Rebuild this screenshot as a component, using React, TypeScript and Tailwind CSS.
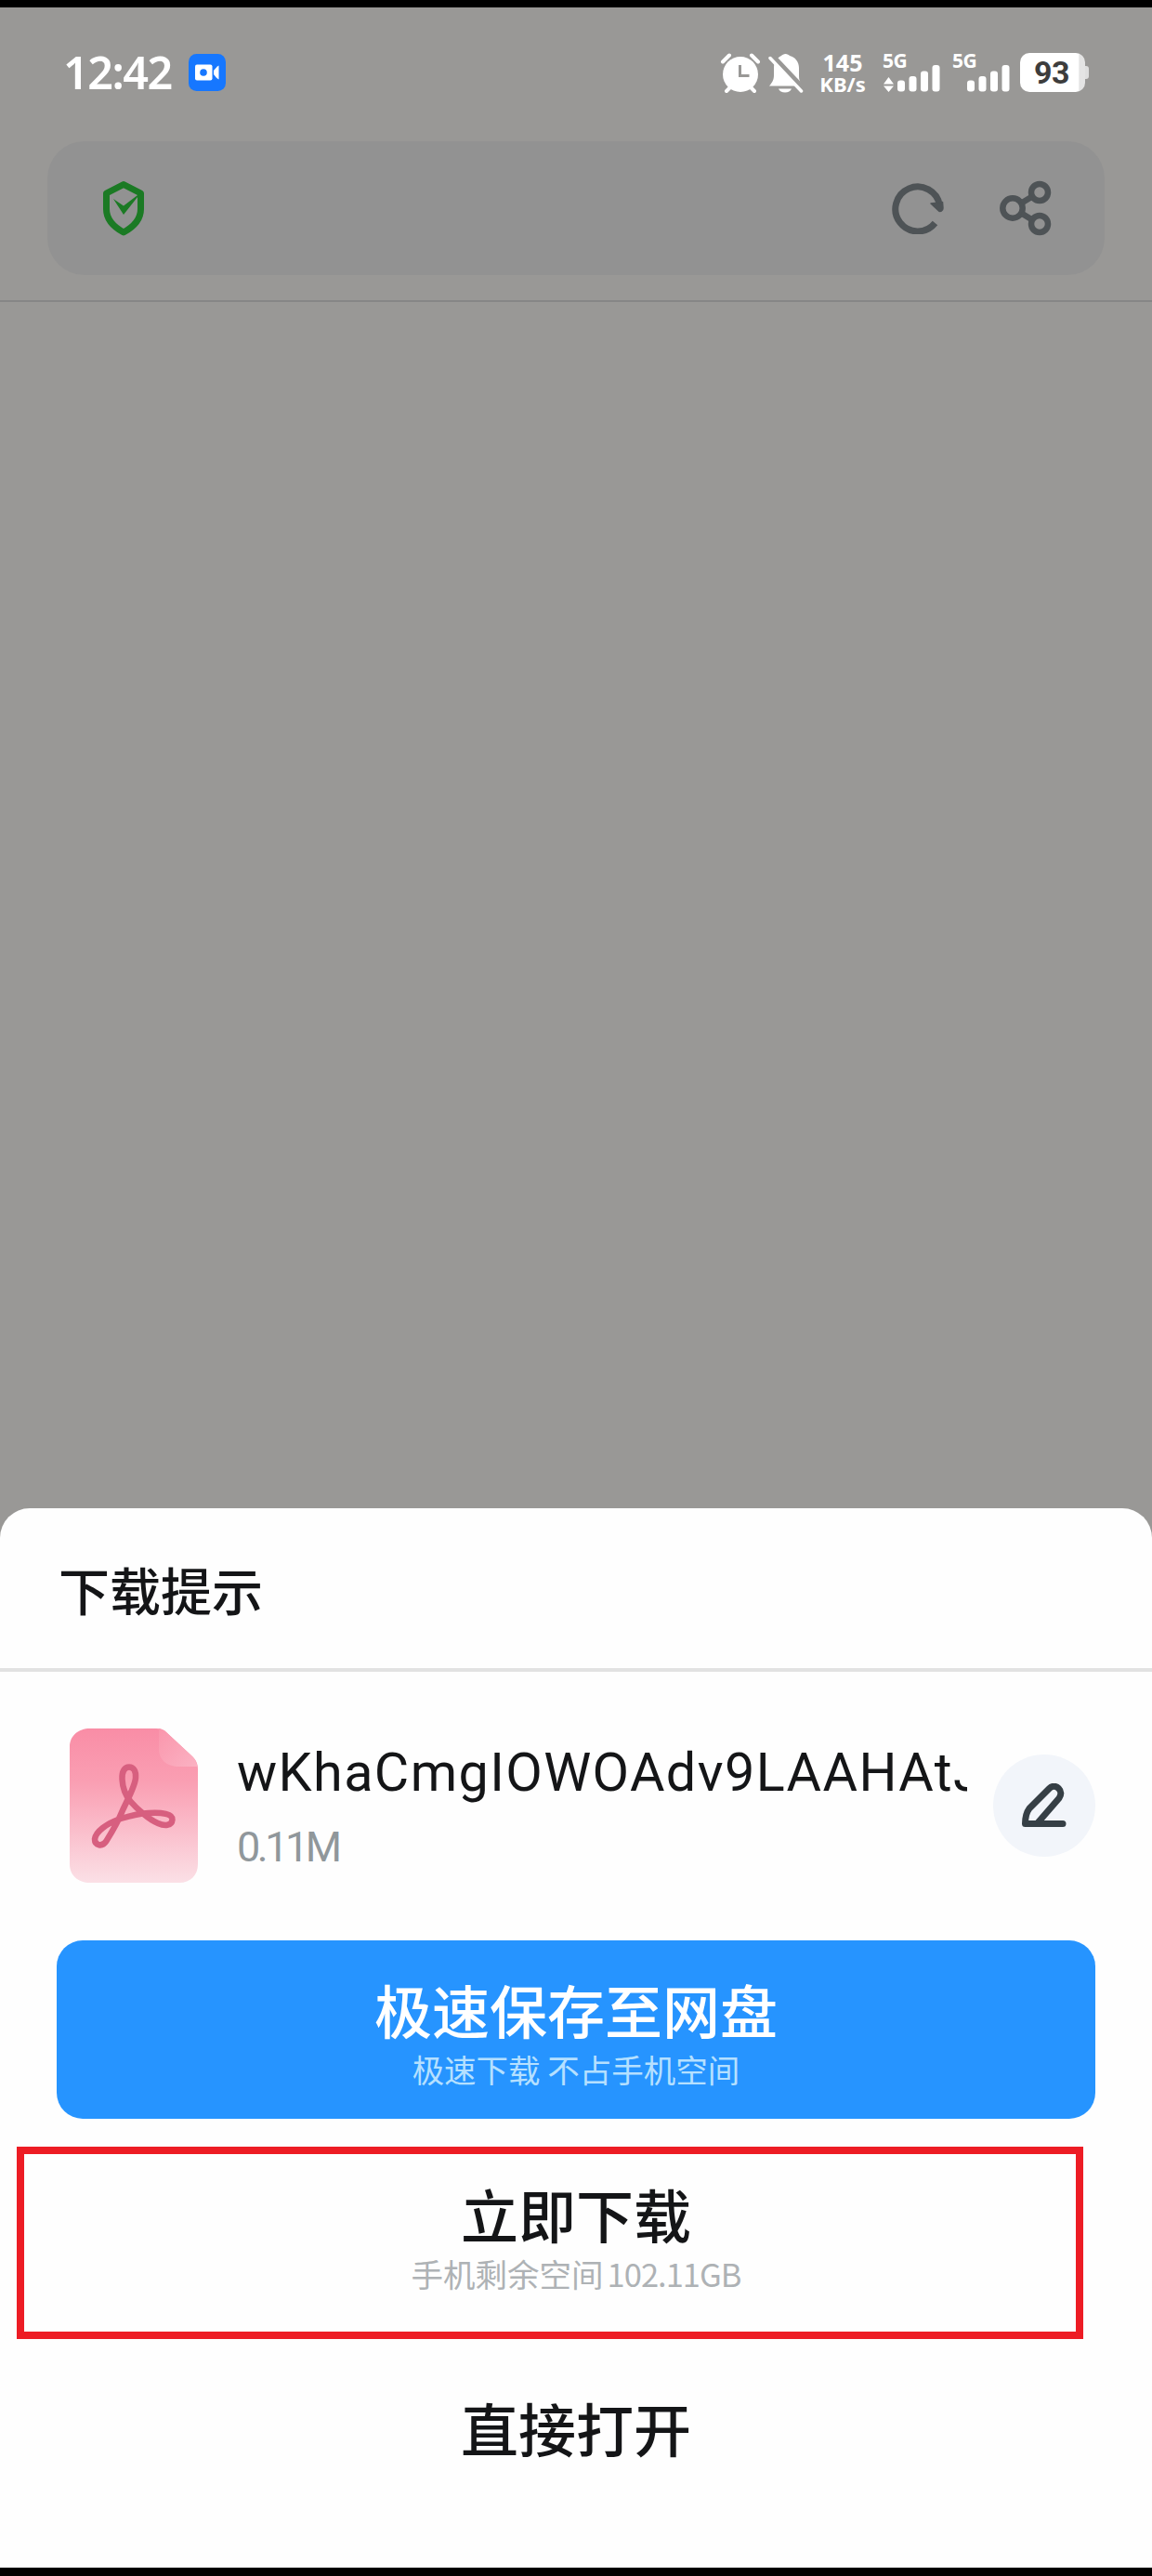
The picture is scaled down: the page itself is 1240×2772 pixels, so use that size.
import React from "react";

const CJK = "font-['Noto_Sans_CJK_SC',sans-serif]";
const LATIN = "font-['Noto_Sans','Noto_Sans_CJK_SC',sans-serif]";
const NAME = "font-['Roboto','Noto_Sans_CJK_SC',sans-serif]";

function AlarmIcon() {
  return (
    <svg className="h-[44px] w-[44px] shrink-0" viewBox="0 0 44 44" fill="none">
      <circle cx="22" cy="23" r="19" fill="#fff" />
      <path d="M3 9.500l7-7M41 9.500l-7-7M7 41l5-5M37 41l-5-5" stroke="#fff" strokeWidth="4" strokeLinecap="round" />
      <path d="M21.500 13v11.500h10" stroke="#999896" strokeWidth="3" />
    </svg>
  );
}

function BellOffIcon() {
  return (
    <svg className="h-[44px] w-[38px] shrink-0" viewBox="0 0 38 44" fill="none">
      <path
        d="M18.500 1c2 0 3.500 1 4.500 2 6 1.500 10 6.500 10 13v9c0 4 1 7 4.500 10.500H1C5 31 6 28 6 24v-8C6 9.500 9 5.500 14 3c1-1 2.500-2 4.500-2z"
        fill="#fff"
      />
      <path d="M11 38.500h14c-1 2.500-3.600 4-7 4s-6-1.500-7-4z" fill="#fff" />
      <path d="M2 1.500l36 38" stroke="#999896" strokeWidth="7" />
      <path d="M2 5.500l33.500 35.500" stroke="#fff" strokeWidth="3.500" strokeLinecap="round" />
    </svg>
  );
}

function Signal({ arrows }: { arrows?: boolean }) {
  return (
    <div className="flex h-[42px] w-[63px] flex-col justify-between">
      <span className={`${LATIN} -mt-[1px] h-0 text-[21px] leading-[18px] font-bold tracking-[-0.500px]`}>5G</span>
      <svg className="h-[31px] w-[63px]" viewBox="0 0 63 31" fill="#fff">
        {arrows && <path d="M1 22.500L6.500 15 12 22.500zM1 24.500L6.500 31 12 24.500z" />}
        <rect x="16" y="18.500" width="8" height="12" rx="3" />
        <rect x="28.500" y="14" width="8" height="16.500" rx="3" />
        <rect x="41" y="8.500" width="8" height="22" rx="3" />
        <rect x="53.500" y="2" width="8" height="28.500" rx="3" />
      </svg>
    </div>
  );
}

function StatusBar() {
  return (
    <header className="flex h-[144px] shrink-0 items-start pt-[49px] pr-[68px] pl-[68px] text-white">
      <span className={`${LATIN} w-[135px] text-[48.500px] leading-[41px] font-semibold tracking-[-1.500px]`}>12:42</span>
      <svg className="mt-[1px] h-[40px] w-[40px]" viewBox="0 0 40 40">
        <rect width="40" height="40" rx="8.500" fill="#1677ff" />
        <rect x="7" y="11.500" width="18.500" height="17" rx="2" fill="#fff" />
        <circle cx="16" cy="20" r="3.800" fill="#1677ff" />
        <path d="M27 18c1.500-2 3.500-4.500 5.500-5.500v15c-2-1-4-3.500-5.500-5.500z" fill="#fff" />
      </svg>
      <div className="ml-auto flex h-[44px] items-start">
        <AlarmIcon />
        <div className="ml-[8px]">
          <BellOffIcon />
        </div>
        <div className={`${LATIN} ml-[17px] flex w-[50px] flex-col items-center font-bold`}>
          <span className="text-[25px] leading-[20px]">145</span>
          <span className="mt-[3px] text-[22px] leading-[21px]">KB/s</span>
        </div>
        <div className="ml-[18px]">
          <Signal arrows />
        </div>
        <div className="ml-[12px]">
          <Signal />
        </div>
        <div className="ml-[10px] flex items-center">
          <div
            className={`${NAME} flex h-[42px] w-[70px] items-center justify-center rounded-[10px] bg-[linear-gradient(90deg,#fff_90%,#e4e4e4_91%)] text-[34px] leading-none font-bold tracking-[-0.500px] text-[#3d3d3d]`}
          >
            <span className="-translate-x-[1px]">93</span>
          </div>
          <div className="h-[14px] w-[4px] rounded-r-[3px] bg-[#dedede]" />
        </div>
      </div>
    </header>
  );
}

function AddressBar() {
  return (
    <div className="mx-[51px] flex h-[144px] shrink-0 items-center rounded-[40px] bg-[#929292] pr-[57px] pl-[59px]">
      <svg className="h-[60px] w-[46px]" viewBox="0 0 46 60" fill="none">
        <path
          d="M23 4.500L41.500 14v17c0 11-7.500 19-18.500 25C12 50 4.500 42 4.500 31V14z"
          stroke="#1b7a24"
          strokeWidth="7"
          strokeLinejoin="round"
        />
        <path d="M12 20l11 7.500L42 13 23 37z" fill="#1b7a24" />
      </svg>
      <svg className="ml-auto h-[56px] w-[56px]" viewBox="0 0 56 56" fill="none">
        <path d="M46.500 44a24 24 0 1 1 5-19" stroke="#4e5356" strokeWidth="7" />
        <path d="M54.500 21.500l.5 6.500c0 3-3 4.500-5 2.500L42 23z" fill="#4e5356" stroke="#4e5356" strokeWidth="1.500" strokeLinejoin="round" />
      </svg>
      <svg className="ml-[59px] h-[60px] w-[57px]" viewBox="0 0 57 60" fill="none" stroke="#4e5356" strokeWidth="6.500">
        <circle cx="15" cy="30" r="10.700" />
        <circle cx="44" cy="13" r="9" />
        <circle cx="44" cy="47" r="9" />
        <path d="M24.500 24.500l11.500-7M24.500 35.500l11.500 7" />
      </svg>
    </div>
  );
}

function PdfIcon() {
  return (
    <svg className="h-[166px] w-[138px] shrink-0" viewBox="0 0 138 166" fill="none">
      <defs>
        <linearGradient id="pdf-page" x1="0" y1="0" x2="0" y2="1">
          <stop offset="0" stopColor="#f98da6" />
          <stop offset="0.350" stopColor="#fa9fb3" />
          <stop offset="1" stopColor="#fbe0e6" />
        </linearGradient>
        <linearGradient id="pdf-fold" x1="0" y1="0" x2="1" y2="1">
          <stop offset="0" stopColor="#fa96ac" />
          <stop offset="1" stopColor="#fbb2c3" />
        </linearGradient>
      </defs>
      <path
        d="M22 0h71c5 0 8 1 11 4l28 26c4 4 6 8 6 14v102c0 12-8 20-20 20H22C9 166 0 158 0 146V20C0 8 9 0 22 0z"
        fill="url(#pdf-page)"
      />
      <path d="M96 0c3 .5 6 2 8 4l28 26c3 3 5 7 5.500 11H118c-13 0-22-7-22-19z" fill="url(#pdf-fold)" />
      <path
        d="M64 41.500c-5 0-8 5-7.500 13 .5 10 4 18 9 24C72 86 85 98 95 102c7 3 15 3 15.500-4 .5-6-11-8-25.500-7-10 .5-20 3-30 6-15 5-27 14-28 22 0 7 8 9 12.500 2C47 109 53 98 57 88c5-11 13.500-26 14-35 .5-7-2-11.500-7-11.500z"
        stroke="#d75f7f"
        strokeWidth="6.500"
        strokeLinejoin="round"
      />
    </svg>
  );
}

function FileRow() {
  return (
    <div className="flex h-[289px] shrink-0 items-start pt-[61px] pr-[61px] pl-[75px]">
      <PdfIcon />
      <div className={`${NAME} ml-[42px] w-[786px]`}>
        <p className="mt-[12px] overflow-hidden text-[57.500px] leading-[72px] tracking-[1.400px] whitespace-nowrap text-[#141517]">
          wKhaCmgIOWOAdv9LAAHAtJ
        </p>
        <p className="mt-[17px] text-[45px] leading-[54px] tracking-[-3.500px] text-[#90979b]">0.11M</p>
      </div>
      <button className="mt-[28px] ml-auto flex h-[110px] w-[110px] shrink-0 items-center justify-center rounded-full bg-[#f2f5fa]">
        <svg className="h-[48px] w-[50px]" viewBox="0 0 50 48" fill="none">
          <path
            d="M45 43.500H4.500C4.500 36 6 31 9 27L30.500 5.500c3-3 7-3 10 0s3 7 .5 10.500L18 42.500"
            stroke="#363f45"
            strokeWidth="7"
            strokeLinecap="round"
            strokeLinejoin="round"
          />
        </svg>
      </button>
    </div>
  );
}

function DownloadSheet() {
  return (
    <section className="flex h-[1140px] flex-col rounded-t-[32px] bg-[#fefefe]">
      <h1 className={`${CJK} flex h-[176px] shrink-0 items-center border-b-4 border-[#e2e2e2] pl-[63px] text-[55px] font-medium text-[#141517]`}>
        下载提示
      </h1>
      <FileRow />
      <button className={`${CJK} mx-[61px] flex h-[192px] shrink-0 flex-col items-center rounded-[28px] bg-[#2694ff] pt-[37px]`}>
        <span className="text-[62px] leading-[74px] font-medium text-white">极速保存至网盘</span>
        <span className="mt-[7px] text-[34.500px] leading-[40px] text-[#b5e0ff]">极速下载 不占手机空间</span>
      </button>
      <button className={`${CJK} relative mt-[30px] flex h-[207px] shrink-0 flex-col items-center pt-[35px]`}>
        <span className="text-[62px] leading-[74px] font-medium text-[#141517]">立即下载</span>
        <span className="mt-[7px] text-[34.500px] leading-[40px] text-[#aeb2b5]">
          手机剩余空间<span className="ml-[4px] tracking-[-1px]">102.11GB</span>
        </span>
        <span className="absolute inset-y-0 right-[74px] left-[18px] border-8 border-[#ed1c24]" />
      </button>
      <button className={`${CJK} mt-[58px] text-[62px] leading-[74px] font-medium text-[#141517]`}>直接打开</button>
    </section>
  );
}

export default function App() {
  return (
    <main className="flex h-[2772px] w-[1240px] flex-col overflow-hidden border-t-8 border-b-[9px] border-black bg-[#999896]">
      <div className="flex h-[1615px] shrink-0 flex-col">
        <StatusBar />
        <AddressBar />
        <div className="mt-[27px] h-[2px] bg-[#868686]" />
      </div>
      <DownloadSheet />
    </main>
  );
}
